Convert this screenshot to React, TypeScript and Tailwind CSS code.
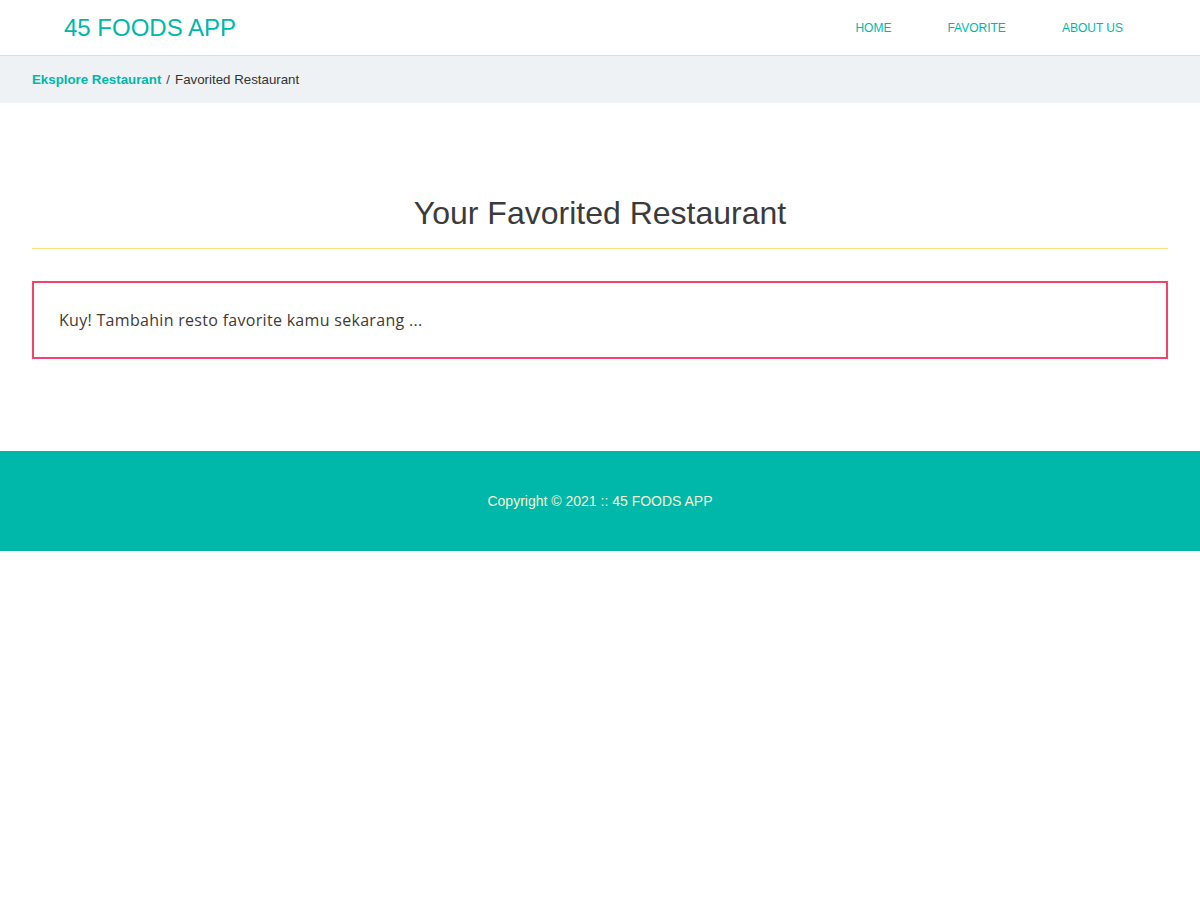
export default function App() {
  return (
    <div className="min-h-[900px] bg-white font-['Liberation_Sans',Arial,sans-serif]">
      <header className="flex h-14 items-center justify-between border-b border-solid border-b-[#ffde7d] pl-16 pr-[49px]">
        <a className="text-[24px] leading-none text-[#00b8a9]">45 FOODS APP</a>
        <nav>
          <ul className="flex">
            <li><a className="block px-7 text-[12px] text-[#00b8a9]">HOME</a></li>
            <li><a className="block px-7 text-[12px] text-[#00b8a9]">FAVORITE</a></li>
            <li><a className="block px-7 text-[12px] text-[#00b8a9]">ABOUT US</a></li>
          </ul>
        </nav>
      </header>

      <div className="flex h-[47px] items-center bg-[#eef2f5] px-8 text-[13.3px]">
        <a className="font-bold text-[#00b8a9]">Eksplore Restaurant</a>
        <span className="mx-[5px] text-[#444]">/</span>
        <span className="text-[#333]">Favorited Restaurant</span>
      </div>

      <main className="px-8 pt-[91px] pb-[92px]">
        <h2 className="border-b border-solid border-b-[#ffde7d] pb-[16px] text-center text-[32px] leading-[38px] text-[#3b3b3b]">
          Your Favorited Restaurant
        </h2>
        <div className="mt-8 border-2 border-[#f6416c] px-[25px] py-[25px]">
          <p className="font-['Open_Sans',sans-serif] text-[16px] leading-6 tracking-[0.3px] text-[#3f3a36]">
            Kuy! Tambahin resto favorite kamu sekarang ...
          </p>
        </div>
      </main>

      <footer className="flex h-[100px] items-center justify-center bg-[#00b8a9] text-[14px] text-[#f8f3d4]">
        Copyright © 2021 :: 45 FOODS APP
      </footer>
    </div>
  );
}
